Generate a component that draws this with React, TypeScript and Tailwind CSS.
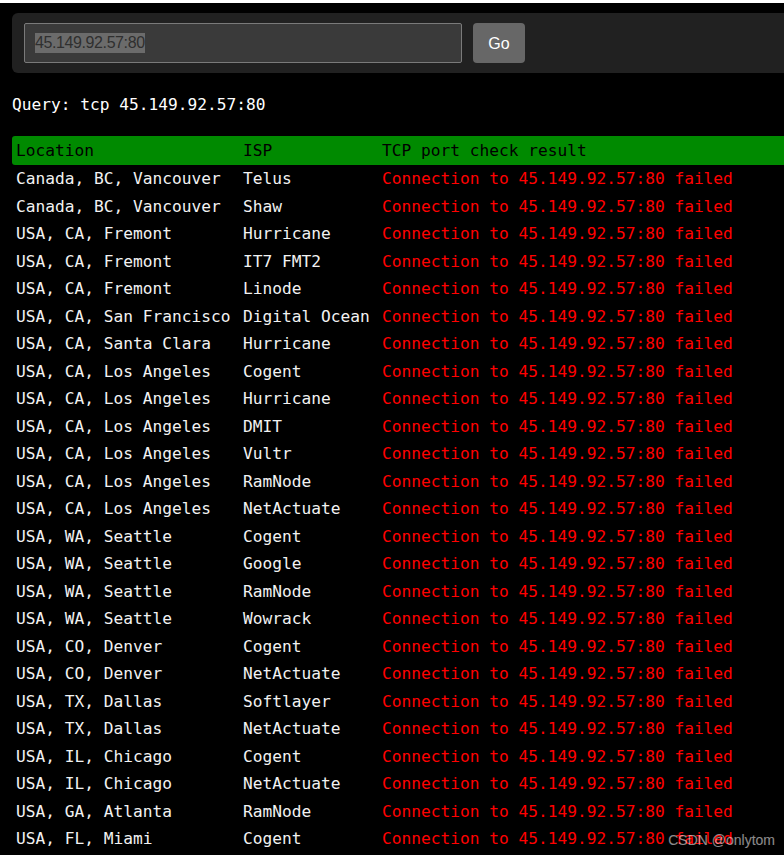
import React from 'react';

interface Row {
  location: string;
  isp: string;
}

const target = '45.149.92.57:80';

const rows: Row[] = [
  { location: 'Canada, BC, Vancouver', isp: 'Telus' },
  { location: 'Canada, BC, Vancouver', isp: 'Shaw' },
  { location: 'USA, CA, Fremont', isp: 'Hurricane' },
  { location: 'USA, CA, Fremont', isp: 'IT7 FMT2' },
  { location: 'USA, CA, Fremont', isp: 'Linode' },
  { location: 'USA, CA, San Francisco', isp: 'Digital Ocean' },
  { location: 'USA, CA, Santa Clara', isp: 'Hurricane' },
  { location: 'USA, CA, Los Angeles', isp: 'Cogent' },
  { location: 'USA, CA, Los Angeles', isp: 'Hurricane' },
  { location: 'USA, CA, Los Angeles', isp: 'DMIT' },
  { location: 'USA, CA, Los Angeles', isp: 'Vultr' },
  { location: 'USA, CA, Los Angeles', isp: 'RamNode' },
  { location: 'USA, CA, Los Angeles', isp: 'NetActuate' },
  { location: 'USA, WA, Seattle', isp: 'Cogent' },
  { location: 'USA, WA, Seattle', isp: 'Google' },
  { location: 'USA, WA, Seattle', isp: 'RamNode' },
  { location: 'USA, WA, Seattle', isp: 'Wowrack' },
  { location: 'USA, CO, Denver', isp: 'Cogent' },
  { location: 'USA, CO, Denver', isp: 'NetActuate' },
  { location: 'USA, TX, Dallas', isp: 'Softlayer' },
  { location: 'USA, TX, Dallas', isp: 'NetActuate' },
  { location: 'USA, IL, Chicago', isp: 'Cogent' },
  { location: 'USA, IL, Chicago', isp: 'NetActuate' },
  { location: 'USA, GA, Atlanta', isp: 'RamNode' },
  { location: 'USA, FL, Miami', isp: 'Cogent' },
];

const App: React.FC = () => {
  return (
    <div className="relative min-h-screen w-full overflow-hidden bg-black">
      <div className="h-[3px] bg-white" />

      <div className="w-[840px] pl-[12px] font-['DejaVu_Sans_Mono',monospace] text-[16.2px]">
        {/* search bar */}
        <div className="mt-[10px] flex h-[60px] items-center gap-[11px] rounded-md bg-[#212121] px-[12px]">
          <div className="flex h-[40px] w-[438px] items-center rounded-[2px] border border-[#7a7a7a] bg-[#3a3a3a] px-[10px] font-['Liberation_Sans',Arial,sans-serif] text-[16px]">
            <span className="bg-[#6b6b6b] leading-[20px] tracking-[-0.4px] text-[#2f2f2f]">{target}</span>
          </div>
          <button
            type="button"
            className="h-[40px] w-[52px] rounded-[4px] bg-[#676767] pt-[1px] font-['Liberation_Sans',Arial,sans-serif] text-[16px] text-white"
          >
            Go
          </button>
        </div>

        <div className="mt-[20px] h-[24px] leading-[24px] text-white">Query: tcp {target}</div>

        {/* results */}
        <div className="mt-[19px]">
          <div className="flex h-[29px] items-center rounded-l-[3px] bg-[#008a00] pt-[2px] text-black">
            <span className="w-[231px] pl-[4px]">Location</span>
            <span className="w-[139px]">ISP</span>
            <span>TCP port check result</span>
          </div>
          {rows.map((row, i) => (
            <div key={i} className="flex h-[27.5px] items-center whitespace-pre pt-[1px]">
              <span className="w-[231px] pl-[4px] text-[#f2f2f2]">{row.location}</span>
              <span className="w-[139px] text-[#f2f2f2]">{row.isp}</span>
              <span className="text-[#ff0000]">Connection to {target} failed</span>
            </div>
          ))}
        </div>
      </div>

      <div className="absolute right-[9px] top-[830px] font-['Liberation_Sans',Arial,sans-serif] text-[14px] text-white/55">
        CSDN @onlytom
      </div>
    </div>
  );
};

export default App;
